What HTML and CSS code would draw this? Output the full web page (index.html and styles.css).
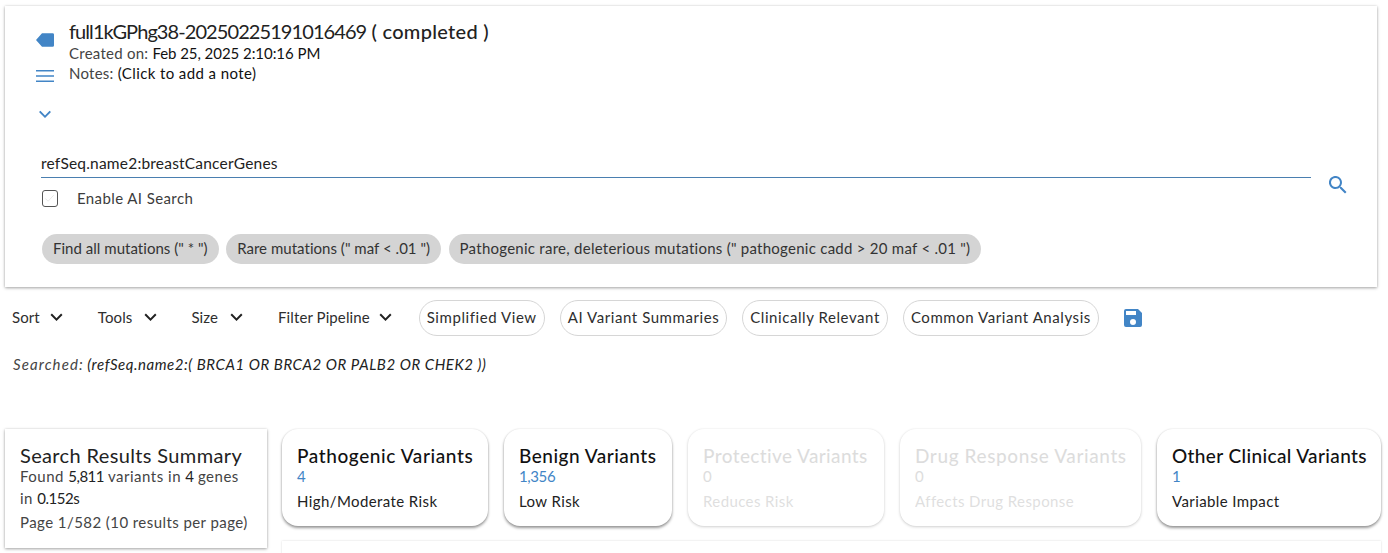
FILE: index.html
```html
<!DOCTYPE html>
<html lang="en">
<head>
<meta charset="utf-8">
<title>Search Results</title>
<link rel="stylesheet" href="styles.css">
</head>
<body>
<div class="page">
  <section class="paper search-paper">
    <div class="meta-row">
      <div class="meta-icons">
        <svg class="icon-label" viewBox="0 0 18 14"><path d="M18 1.6v10.8a1.4 1.4 0 0 1-1.4 1.4H6L0 7l6-6.8h10.6A1.4 1.4 0 0 1 18 1.6z"/></svg>
        <svg class="icon-notes" viewBox="0 0 18 12"><path d="M0 0h18v1.6H0zM0 5.2h18v1.6H0zM0 10.4h18V12H0z"/></svg>
        <svg class="icon-chevron" viewBox="0 0 12 8"><path d="M1.4 .8 6 5.4 10.6 .8 12 2.1 6 8 0 2.1z"/></svg>
      </div>
      <div class="meta-text">
        <div class="meta-title"><span class="run-id">full1kGPhg38-20250225191016469</span> <span class="status">( completed )</span></div>
        <div class="meta-line"><span class="faint">Created on:</span> <span class="medium date">Feb 25, 2025 2:10:16 PM</span></div>
        <div class="meta-line"><span class="faint">Notes:</span> <span class="medium note">(Click to add a note)</span></div>
      </div>
    </div>
    <div class="query-row">
      <div class="query-main">
        <input class="query-input" type="text" value="refSeq.name2:breastCancerGenes" aria-label="Search query">
        <label class="ai-toggle"><span class="checkbox"><svg class="check" viewBox="0 0 14 14"><path d="M2.5 7.5 5.5 10.5 11.5 4"/></svg></span><span class="ai-label">Enable AI Search</span></label>
      </div>
      <svg class="icon-search" viewBox="0 0 18 18"><path d="M12.5 11h-.8l-.3-.3A6.5 6.5 0 1 0 10.7 11.4l.3.3v.8l5 5 1.5-1.5zm-6 0a4.5 4.5 0 1 1 0-9 4.5 4.5 0 0 1 0 9z"/></svg>
    </div>
    <div class="chips">
      <span class="chip chip-tight">Find all mutations (" * ")</span>
      <span class="chip chip-tight">Rare mutations (" maf &lt; .01 ")</span>
      <span class="chip">Pathogenic rare, deleterious mutations (" pathogenic cadd &gt; 20 maf &lt; .01 ")</span>
    </div>
  </section>

  <nav class="toolbar">
    <span class="menu menu-sort">Sort <svg class="caret" viewBox="0 0 12 8"><path d="M1.4 .6 6 5.2 10.6 .6 12 2 6 8 0 2z"/></svg></span>
    <span class="menu menu-tools">Tools <svg class="caret" viewBox="0 0 12 8"><path d="M1.4 .6 6 5.2 10.6 .6 12 2 6 8 0 2z"/></svg></span>
    <span class="menu menu-size">Size <svg class="caret" viewBox="0 0 12 8"><path d="M1.4 .6 6 5.2 10.6 .6 12 2 6 8 0 2z"/></svg></span>
    <span class="menu menu-filter">Filter Pipeline <svg class="caret" viewBox="0 0 12 8"><path d="M1.4 .6 6 5.2 10.6 .6 12 2 6 8 0 2z"/></svg></span>
    <span class="pill pill-first">Simplified View</span>
    <span class="pill">AI Variant Summaries</span>
    <span class="pill">Clinically Relevant</span>
    <span class="pill">Common Variant Analysis</span>
    <svg class="icon-save" viewBox="0 0 18 18"><path d="M14 0H2a2 2 0 0 0-2 2v14a2 2 0 0 0 2 2h14a2 2 0 0 0 2-2V4zm-5 16a3 3 0 1 1 0-6 3 3 0 0 1 0 6zm3-10H2V2h10z"/></svg>
  </nav>

  <p class="searched"><span class="searched-label">Searched:</span> <span class="searched-q">(refSeq.name2:( BRCA1 OR BRCA2 OR PALB2 OR CHEK2 ))</span></p>

  <div class="results">
    <aside class="paper summary">
      <h2 class="summary-title">Search Results Summary</h2>
      <p class="summary-line"><span class="faint">Found</span> <span class="num">5,811</span> <span class="faint">variants in</span> <span class="num">4</span> <span class="faint">genes</span></p>
      <p class="summary-line"><span class="faint">in</span> <span class="num">0.152s</span></p>
      <p class="summary-line summary-page">Page 1/582 (10 results per page)</p>
    </aside>
    <div class="results-main">
      <div class="cards">
        <article class="card"><h3 class="card-title title-wide">Pathogenic Variants</h3><div class="card-count">4</div><div class="card-note">High/Moderate Risk</div></article>
        <article class="card"><h3 class="card-title">Benign Variants</h3><div class="card-count">1,356</div><div class="card-note">Low Risk</div></article>
        <article class="card card-off"><h3 class="card-title title-tight">Protective Variants</h3><div class="card-count">0</div><div class="card-note">Reduces Risk</div></article>
        <article class="card card-off"><h3 class="card-title title-wide">Drug Response Variants</h3><div class="card-count">0</div><div class="card-note">Affects Drug Response</div></article>
        <article class="card"><h3 class="card-title title-tight">Other Clinical Variants</h3><div class="card-count">1</div><div class="card-note">Variable Impact</div></article>
      </div>
      <div class="paper next-panel"></div>
    </div>
  </div>
</div>
</body>
</html>
```
FILE: styles.css
```css
* { box-sizing: border-box; }
html, body { margin: 0; height: 553px; overflow: hidden; background: #fff; }
body { font-family: "Lato", "Open Sans", sans-serif; color: #2a2a2a; font-size: 15px; }
.page { padding: 6px 7px 0 5px; }
.paper { background: #fff; box-shadow: 0 1px 3px rgba(0,0,0,.35), 0 0 2px rgba(0,0,0,.08); }
.faint { color: #444; }
.medium { color: #111; }

.search-paper { width: 1372px; height: 281px; padding: 13px 30px 0 31px; }
.meta-row { display: flex; height: 129px; }
.meta-icons { width: 33px; display: flex; flex-direction: column; align-items: flex-start; }
.meta-icons svg { fill: #4285c6; display: block; }
.icon-label { width: 18px; height: 14px; margin-top: 14px; }
.icon-notes { width: 18px; height: 12px; margin-top: 23px; }
.icon-chevron { width: 12px; height: 8px; margin: 28px 0 0 3px; }
.meta-title { font-size: 20px; line-height: 24px; color: #222; }
.run-id { letter-spacing: -.92px; }
.status { font-weight: 500; letter-spacing: .3px; }
.meta-line { font-size: 15px; line-height: 20px; letter-spacing: .25px; }
.date { letter-spacing: -.05px; }
.note { letter-spacing: .4px; }

.query-row { display: flex; margin-left: 5px; }
.query-main { width: 1270px; }
.query-input { display: block; width: 100%; height: 30px; padding: 0; border: 0; border-bottom: 1px solid #4a7fb0; outline: 0; background: none; font: inherit; font-size: 15.5px; color: #222; letter-spacing: .2px; }
.ai-toggle { display: flex; align-items: center; margin-top: 11px; height: 18px; }
.checkbox { display: block; width: 16px; height: 17px; margin-left: 1px; border: 1.5px solid #555; border-radius: 3px; background: #fff; }
.check { display: block; width: 13px; height: 14px; fill: none; stroke: #e6e6e6; stroke-width: 1; }
.ai-label { margin-left: 19px; font-size: 15px; letter-spacing: .4px; color: #3c3c3c; }
.icon-search { width: 18px; height: 18px; margin: 28px 0 0 18px; fill: #4285c6; }

.chips { display: flex; gap: 7.5px; margin: 27px 0 0 6px; }
.chip { height: 30px; line-height: 29px; padding: 0 11px; border-radius: 15px; background: #d4d4d4; font-size: 15px; color: #333; letter-spacing: .26px; white-space: nowrap; }
.chip-tight { letter-spacing: .03px; }

.toolbar { display: flex; align-items: center; height: 36px; margin-top: 13px; font-size: 15px; letter-spacing: .1px; color: #2e2e2e; }
.menu { display: inline-flex; align-items: center; margin-left: 35px; padding-bottom: 2px; white-space: nowrap; }
.caret { width: 13px; height: 8px; fill: #222; }
.menu-sort { margin-left: 7px; }
.menu-sort .caret { margin-left: 10px; }
.menu-tools .caret { margin-left: 12px; }
.menu-size { margin-left: 34px; }
.menu-size .caret { margin-left: 12px; }
.menu-filter .caret { margin-left: 9px; }
.pill { height: 36px; line-height: 32px; margin-left: 15px; padding: 0 7px; border: 1px solid #d6d6d6; border-radius: 18px; letter-spacing: .57px; white-space: nowrap; }
.pill-first { margin-left: 27px; }
.icon-save { width: 18px; height: 18px; margin: 0 0 1px 25px; fill: #4285c6; }

.searched { margin: 18px 0 0 8px; height: 20px; font-size: 15px; line-height: 20px; font-style: italic; color: #444; }
.searched-label { letter-spacing: 1.1px; }
.searched-q { color: #222; letter-spacing: .54px; }

.results { display: flex; gap: 15px; margin-top: 55px; }
.summary { width: 262px; height: 119px; padding: 16px 15px 0; flex: none; }
.summary-title { margin: 0; font-size: 20px; line-height: 20px; font-weight: 400; color: #222; letter-spacing: .36px; white-space: nowrap; }
.summary-line { margin: 0; font-size: 15px; line-height: 22px; letter-spacing: .5px; color: #222; white-space: nowrap; }
.num { letter-spacing: -.5px; }
.summary-page { margin-top: 2px; color: #444; letter-spacing: .43px; }
.results-main { flex: 1; min-width: 0; }
.cards { display: grid; grid-template-columns: 206px 168px 196px 241px 224px; gap: 16px; }
.card { height: 97px; padding: 15px 14px 0 15px; border-radius: 16px; background: #fff; box-shadow: 0 2px 3px rgba(0,0,0,.4), 0 0 2px rgba(0,0,0,.12); white-space: nowrap; }
.card-off { box-shadow: 0 1px 3px rgba(0,0,0,.18), 0 0 2px rgba(0,0,0,.06); }
.card-off .card-title, .card-off .card-note { opacity: .14; }
.card-off .card-count { color: #ddd; }
.card-title { margin: 0; font-size: 19px; line-height: 23px; font-weight: 500; color: #111; letter-spacing: .5px; }
.title-wide { letter-spacing: .6px; }
.title-tight { letter-spacing: .38px; }
.card-count { margin-top: 1px; font-size: 15px; line-height: 16px; letter-spacing: -.4px; color: #4285c6; }
.card-note { margin-top: 7px; font-size: 15px; line-height: 20px; color: #222; letter-spacing: .4px; }
.next-panel { height: 30px; margin-top: 15px; width: 1099px; box-shadow: 0 0 2px rgba(0,0,0,.15); }
```
